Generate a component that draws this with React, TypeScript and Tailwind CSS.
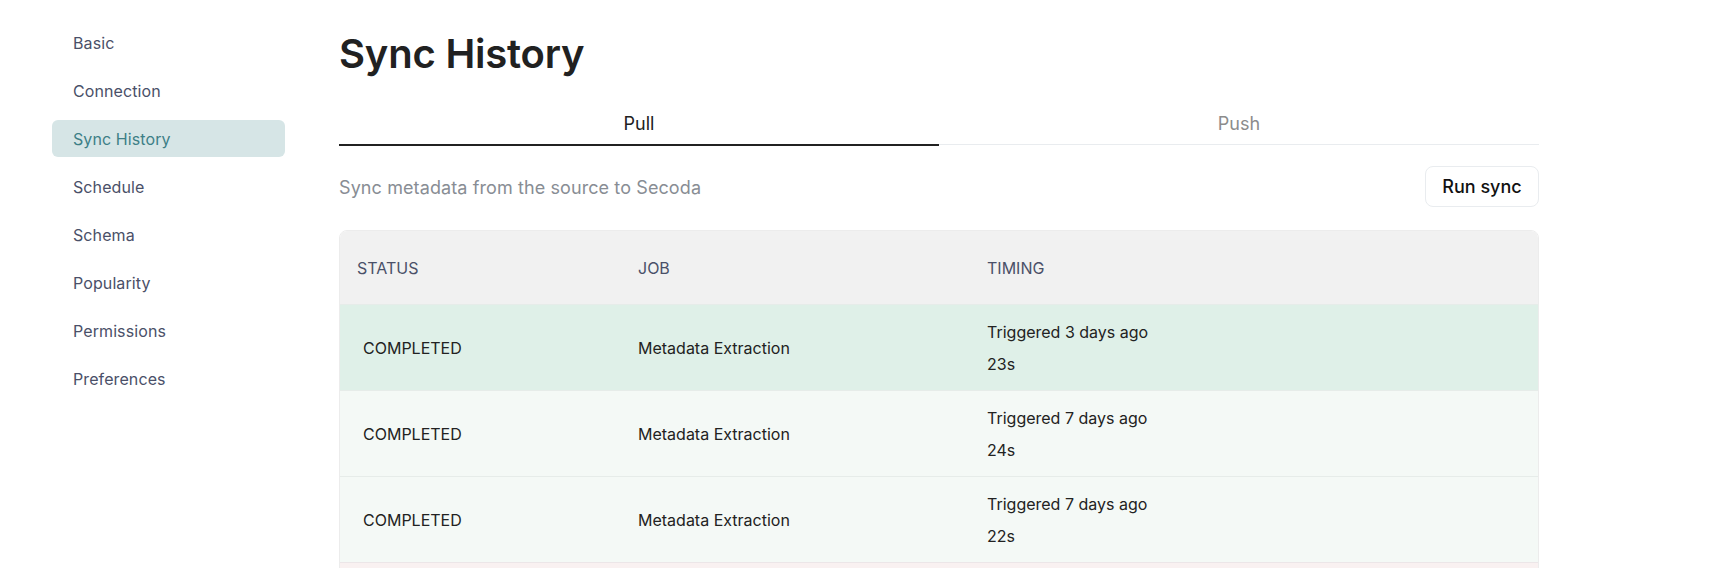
import React from "react";

const navItems = [
  "Basic",
  "Connection",
  "Sync History",
  "Schedule",
  "Schema",
  "Popularity",
  "Permissions",
  "Preferences",
];

const rows = [
  { status: "COMPLETED", job: "Metadata Extraction", t: "Triggered 3 days ago", d: "23s", bg: "bg-[#dff0e8]" },
  { status: "COMPLETED", job: "Metadata Extraction", t: "Triggered 7 days ago", d: "24s", bg: "bg-[#f4f9f6]" },
  { status: "COMPLETED", job: "Metadata Extraction", t: "Triggered 7 days ago", d: "22s", bg: "bg-[#f4f9f6]" },
];

export default function App() {
  return (
    <div className="flex h-[568px] w-[1720px] overflow-hidden bg-white font-['Inter',sans-serif] antialiased">
      <aside className="w-[285px] shrink-0 pl-[52px] pt-[24px]">
        <nav className="flex flex-col gap-[11px]">
          {navItems.map((item) => {
            const active = item === "Sync History";
            return (
              <div
                key={item}
                className={
                  active
                    ? "flex h-[37px] items-center rounded-md bg-[#d6e5e6] pl-[21px] text-[16px] tracking-[0.1px] text-[#3d7f86]"
                    : "flex h-[37px] items-center pl-[21px] text-[16px] tracking-[0.1px] text-[#4a5068]"
                }
              >
                {item}
              </div>
            );
          })}
        </nav>
      </aside>

      <main className="ml-[54px] w-[1200px] shrink-0">
        <h1 className="pt-[30px] text-[40px] font-semibold leading-[48px] tracking-[-0.2px] text-[#212121]">
          Sync History
        </h1>

        <div className="mt-[22px] flex items-start">
          <div className="flex h-[46px] flex-1 items-center justify-center border-b-2 border-[#212121] pt-[2px] text-[18px] text-[#212121]">
            Pull
          </div>
          <div className="flex h-[45px] flex-1 items-center justify-center border-b border-[#e9ecef] pt-[3px] text-[18px] text-[#8c8c8c]">
            Push
          </div>
        </div>

        <div className="mt-[20px] flex h-[41px] items-center justify-between">
          <span className="pt-[2px] text-[18px] tracking-[0.1px] text-[#888d94]">Sync metadata from the source to Secoda</span>
          <button className="flex h-[41px] w-[114px] items-center justify-center rounded-lg border border-[#e9ecef] bg-white text-[18px] font-medium text-[#111]">
            Run sync
          </button>
        </div>

        <div className="mt-[23px] overflow-hidden rounded-lg border border-[#ececec]">
          <div className="grid h-[73px] grid-cols-[298px_349px_1fr] items-center bg-[#f1f1f1] text-[16px] text-[#4a5068]">
            <div className="pl-[17px]">STATUS</div>
            <div>JOB</div>
            <div>TIMING</div>
          </div>
          {rows.map((r, i) => (
            <div
              key={i}
              className={`grid h-[86px] grid-cols-[298px_349px_1fr] items-center border-t border-[#e6ece9] text-[16px] text-[#222] ${r.bg}`}
            >
              <div className="pl-[23px]">{r.status}</div>
              <div>{r.job}</div>
              <div className="flex flex-col pt-[1px] leading-[32px]">
                <span>{r.t}</span>
                <span>{r.d}</span>
              </div>
            </div>
          ))}
          <div className="h-[40px] border-t border-[#ece6e8] bg-[#f9f1f1]" />
        </div>
      </main>
    </div>
  );
}
